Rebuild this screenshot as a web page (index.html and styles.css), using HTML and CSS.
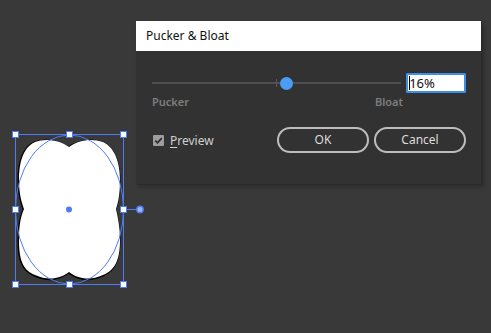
FILE: index.html
```html
<!DOCTYPE html>
<html>
<head>
<meta charset="utf-8">
<link rel="stylesheet" href="styles.css">
</head>
<body>
<div class="canvas">
  <svg class="art" width="160" height="300" viewBox="0 0 160 300">
    <path class="shape-edge" d="M69,147 C60,140 45,138 35,142 C22,148 19,165 19,180 C19,195 22,203 24,209 C20,218 19,228 19,240 C19,258 22,270 35,275 C48,281 60,279 69,272 C78,279 90,281 103,275 C116,270 120,258 120,240 C120,228 118,218 116,209 C118,203 120,195 120,180 C120,165 116,148 103,142 C92,138 78,140 69,147 Z"/>
    <path class="shape" d="M69,147 C60,140 45,138 35,142 C22,148 19,165 19,180 C19,195 22,203 24,209 C20,218 19,228 19,240 C19,258 22,270 35,275 C48,281 60,279 69,272 C78,279 90,281 103,275 C116,270 120,258 120,240 C120,228 118,218 116,209 C118,203 120,195 120,180 C120,165 116,148 103,142 C92,138 78,140 69,147 Z"/>
    <ellipse class="sel" cx="69.5" cy="209.5" rx="54" ry="74.5"/>
    <rect class="sel" x="15.5" y="134.5" width="108" height="150"/>
    <line class="sel" x1="123.5" y1="209.5" x2="137" y2="209.5"/>
    <circle class="rot" cx="140" cy="209.5" r="3.2"/>
    <circle class="center" cx="69" cy="209.5" r="3"/>
    <rect class="handle" x="12.5" y="131.5" width="6" height="6"/>
    <rect class="handle" x="66.5" y="131.5" width="6" height="6"/>
    <rect class="handle" x="120.5" y="131.5" width="6" height="6"/>
    <rect class="handle" x="12.5" y="206.5" width="6" height="6"/>
    <rect class="handle" x="120.5" y="206.5" width="6" height="6"/>
    <rect class="handle" x="12.5" y="281.5" width="6" height="6"/>
    <rect class="handle" x="66.5" y="281.5" width="6" height="6"/>
    <rect class="handle" x="120.5" y="281.5" width="6" height="6"/>
  </svg>

  <div class="dialog">
    <div class="titlebar">Pucker &amp; Bloat</div>
    <div class="dbody">
      <div class="slider-row">
        <div class="slider">
          <div class="track"></div>
          <div class="tick"></div>
          <div class="knob"></div>
        </div>
        <div class="field"><span class="caret"></span>16%</div>
      </div>
      <div class="labels">
        <span>Pucker</span>
        <span>Bloat</span>
      </div>
      <div class="bottom-row">
        <label class="preview">
          <span class="check">
            <svg width="11" height="11" viewBox="0 0 11 11"><path d="M2.3,5.6 L4.5,7.8 L8.8,3.2" fill="none" stroke="#2f2f2f" stroke-width="1.8"/></svg>
          </span>
          <span class="preview-text"><u>P</u>review</span>
        </label>
        <div class="buttons">
          <div class="btn">OK</div>
          <div class="btn">Cancel</div>
        </div>
      </div>
    </div>
  </div>
</div>
</body>
</html>
```
FILE: styles.css
```css
html, body {
  margin: 0;
  padding: 0;
}
body {
  background: #393939;
  width: 491px;
  height: 333px;
  overflow: hidden;
  font-family: "Noto Sans", "Open Sans", sans-serif;
}
.canvas {
  position: relative;
  width: 491px;
  height: 333px;
}
.art {
  position: absolute;
  left: 0;
  top: 0;
}
.shape-edge {
  fill: #000;
  stroke: #000;
  stroke-width: 2;
  transform: translate(-0.5px, 0.5px);
}
.shape {
  fill: #fff;
}
.sel {
  fill: none;
  stroke: #4d7bf3;
  stroke-width: 1;
}
.rot {
  fill: #9fb6f7;
  stroke: #4d7bf3;
  stroke-width: 1.4;
}
.center {
  fill: #4d7bf3;
}
.handle {
  fill: #fff;
  stroke: #4d7bf3;
  stroke-width: 1;
}
.dialog {
  position: absolute;
  left: 136px;
  top: 21px;
  width: 345px;
  height: 163px;
  background: #323232;
  box-shadow: 1px 1px 0 #2a2a2a, 3px 3px 4px rgba(0,0,0,0.25);
  display: flex;
  flex-direction: column;
}
.titlebar {
  height: 30px;
  background: #fff;
  color: #111;
  font-size: 12px;
  line-height: 30px;
  padding-left: 10px;
}
.dbody {
  padding: 22px 15px 0 16px;
  display: flex;
  flex-direction: column;
}
.slider-row {
  display: flex;
  align-items: center;
  gap: 5px;
  height: 20px;
}
.slider {
  position: relative;
  width: 250px;
  height: 20px;
}
.track {
  position: absolute;
  left: 0;
  right: 0;
  top: 9px;
  height: 2px;
  background: #4f4f4f;
}
.tick {
  position: absolute;
  left: 124px;
  top: 6px;
  width: 1px;
  height: 8px;
  background: #5a5a5a;
}
.knob {
  position: absolute;
  left: 128px;
  top: 4px;
  width: 13px;
  height: 13px;
  border-radius: 50%;
  background: #4a9cf4;
}
.field {
  width: 55px;
  height: 16px;
  border: 2px solid #3d8ee8;
  border-radius: 1px;
  background: #fff;
  color: #111;
  font-size: 13px;
  line-height: 16px;
  padding-left: 1px;
  display: flex;
  align-items: center;
}
.caret {
  display: inline-block;
  width: 1px;
  height: 14px;
  background: #000;
  margin-right: -1px;
}
.labels {
  display: flex;
  justify-content: space-between;
  width: 251px;
  margin-top: 2px;
  font-size: 11px;
  font-weight: 600;
  color: #7e7e7e;
  height: 14px;
  line-height: 14px;
}
.bottom-row {
  margin-top: 18px;
  display: flex;
  align-items: center;
  justify-content: space-between;
}
.preview {
  display: flex;
  align-items: center;
  gap: 6px;
  color: #cfcfcf;
  font-size: 12px;
  margin-left: 1px;
}
.check {
  width: 11px;
  height: 11px;
  background: #9d9d9d;
  border-radius: 1px;
  display: flex;
}
.preview-text u {
  text-decoration-thickness: 1px;
  text-underline-offset: 2px;
}
.buttons {
  display: flex;
  gap: 5px;
}
.btn {
  width: 88px;
  height: 22px;
  border: 2px solid #bdbdbd;
  border-radius: 13px;
  color: #dcdcdc;
  font-size: 12px;
  line-height: 22px;
  text-align: center;
}
```
